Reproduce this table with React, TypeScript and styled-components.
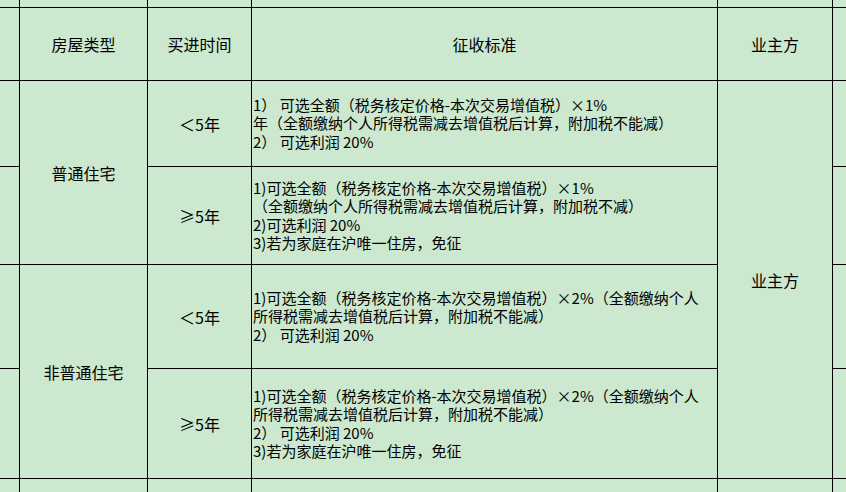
import React from "react";
import styled, { createGlobalStyle } from "styled-components";

const Global = createGlobalStyle`
  html, body {
    margin: 0;
    padding: 0;
    background: #cce8cf;
    overflow: hidden;
  }
  body {
    font-family: "Noto Sans CJK SC", "Noto Sans", sans-serif;
    color: #000;
  }
`;

const Sheet = styled.div`
  display: grid;
  width: 846px;
  height: 492px;
  grid-template-columns: 19px 127px 103px 465px 114px 1fr;
  grid-template-rows: 7px 72px 85px 97px 103px 109px 13px;
  gap: 1px;
  background: #000;
  overflow: hidden;
`;

const Cell = styled.div<{ $row: number; $col: number; $rowSpan?: number }>`
  grid-row: ${(p) => p.$row} / span ${(p) => p.$rowSpan ?? 1};
  grid-column: ${(p) => p.$col};
  background: #cce8cf;
  min-width: 0;
  overflow: hidden;
`;

const Label = styled(Cell)`
  display: flex;
  align-items: center;
  justify-content: center;
  font-size: 16px;
  line-height: 20px;
  white-space: nowrap;
`;

const TextCell = styled(Cell)`
  display: flex;
  flex-direction: column;
  justify-content: center;
  padding-left: 1px;
  font-size: 15px;
  line-height: 18.5px;
  white-space: pre;
`;

const Line = styled.div`
  white-space: pre;
`;

const rules: { row: number; lines: string[] }[] = [
  {
    row: 3,
    lines: [
      "1） 可选全额（税务核定价格-本次交易增值税）×1%",
      "年（全额缴纳个人所得税需减去增值税后计算，附加税不能减）",
      "2） 可选利润 20%",
    ],
  },
  {
    row: 4,
    lines: [
      "1)可选全额（税务核定价格-本次交易增值税）×1%",
      "（全额缴纳个人所得税需减去增值税后计算，附加税不减）",
      "2)可选利润 20%",
      "3)若为家庭在沪唯一住房，免征",
    ],
  },
  {
    row: 5,
    lines: [
      "1)可选全额（税务核定价格-本次交易增值税）×2%（全额缴纳个人",
      "所得税需减去增值税后计算，附加税不能减）",
      "2） 可选利润 20%",
    ],
  },
  {
    row: 6,
    lines: [
      "1)可选全额（税务核定价格-本次交易增值税）×2%（全额缴纳个人",
      "所得税需减去增值税后计算，附加税不能减）",
      "2） 可选利润 20%",
      "3)若为家庭在沪唯一住房，免征",
    ],
  },
];

const periods: { row: number; text: string }[] = [
  { row: 3, text: "＜5年" },
  { row: 4, text: "≥5年" },
  { row: 5, text: "＜5年" },
  { row: 6, text: "≥5年" },
];

export default function App() {
  const fillers: React.ReactNode[] = [];
  // top and bottom strips: all columns
  [1, 7].forEach((r) => {
    for (let c = 1; c <= 6; c++) fillers.push(<Cell key={`f${r}-${c}`} $row={r} $col={c} />);
  });
  // side columns for body rows
  for (let r = 2; r <= 6; r++) {
    fillers.push(<Cell key={`l${r}`} $row={r} $col={1} />);
    fillers.push(<Cell key={`r${r}`} $row={r} $col={6} />);
  }

  return (
    <>
      <Global />
      <Sheet>
        {fillers}
        <Label $row={2} $col={2}>房屋类型</Label>
        <Label $row={2} $col={3}>买进时间</Label>
        <Label $row={2} $col={4}>征收标准</Label>
        <Label $row={2} $col={5}>业主方</Label>

        <Label $row={3} $col={2} $rowSpan={2}>普通住宅</Label>
        <Label $row={5} $col={2} $rowSpan={2}>非普通住宅</Label>
        <Label $row={3} $col={5} $rowSpan={4}>业主方</Label>

        {periods.map((p) => (
          <Label key={`p${p.row}`} $row={p.row} $col={3}>
            {p.text}
          </Label>
        ))}

        {rules.map((r) => (
          <TextCell key={`t${r.row}`} $row={r.row} $col={4}>
            {r.lines.map((l, i) => (
              <Line key={i}>{l}</Line>
            ))}
          </TextCell>
        ))}
      </Sheet>
    </>
  );
}
